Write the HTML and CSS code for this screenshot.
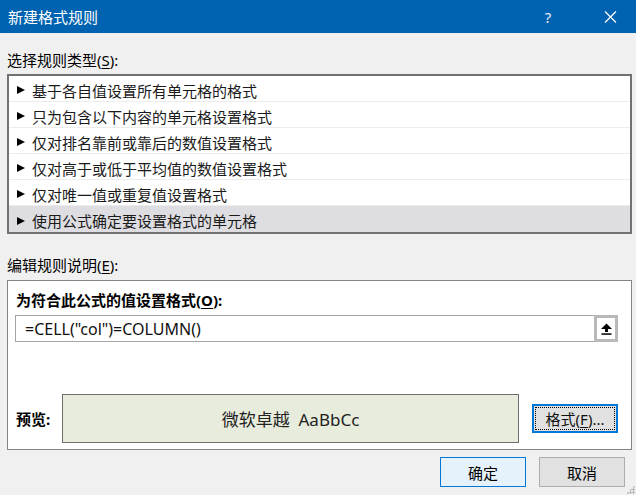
FILE: index.html
```html
<!DOCTYPE html>
<html lang="zh-CN">
<head>
    <meta charset="UTF-8">
    <title>新建格式规则</title>
    <link rel="stylesheet" href="styles.css">
</head>
<body>
    <div class="titlebar">
        <span class="title">新建格式规则</span>
        <span class="title-btn help">?</span>
        <span class="title-btn close">
            <svg width="13" height="12" viewBox="0 0 13 12"><path d="M1 0.5 L12 11.5 M12 0.5 L1 11.5" stroke="#fff" stroke-width="1.2" fill="none"/></svg>
        </span>
    </div>

    <div class="main">
        <div class="section-label first">选择规则类型(<u>S</u>):</div>
        <div class="rule-list">
            <div class="rule-item"><span class="arrow"></span>基于各自值设置所有单元格的格式</div>
            <div class="rule-item"><span class="arrow"></span>只为包含以下内容的单元格设置格式</div>
            <div class="rule-item"><span class="arrow"></span>仅对排名靠前或靠后的数值设置格式</div>
            <div class="rule-item"><span class="arrow"></span>仅对高于或低于平均值的数值设置格式</div>
            <div class="rule-item"><span class="arrow"></span>仅对唯一值或重复值设置格式</div>
            <div class="rule-item selected"><span class="arrow"></span>使用公式确定要设置格式的单元格</div>
        </div>

        <div class="section-label second">编辑规则说明(<u>E</u>):</div>
        <div class="edit-panel">
            <div class="panel-title">为符合此公式的值设置格式(<u>O</u>):</div>
            <div class="formula-row">
                <div class="formula-input">=CELL("col")=COLUMN()</div>
                <div class="ref-btn">
                    <svg width="11" height="12" viewBox="0 0 11 12">
                        <polygon points="0,6 5.5,0.5 11,6" fill="#000"/>
                        <rect x="4" y="5.5" width="3" height="3.5" fill="#000"/>
                        <rect x="0.5" y="10.3" width="10" height="1.5" fill="#000"/>
                    </svg>
                </div>
            </div>
            <div class="preview-row">
                <div class="preview-label">预览:</div>
                <div class="preview-box">微软卓越&nbsp; AaBbCc</div>
                <div class="format-btn"><span class="focus">格式(<u>F</u>)...</span></div>
            </div>
        </div>

        <div class="dialog-buttons">
            <div class="btn default">确定</div>
            <div class="btn">取消</div>
        </div>
    </div>

    <div class="grip"></div>
</body>
</html>
```

FILE: styles.css
```css
body {
    margin: 0;
    width: 636px;
    height: 495px;
    overflow: hidden;
    position: relative;
    background-color: #f0f0f0;
    font-family: "Noto Sans", "Noto Sans CJK SC", sans-serif;
    font-size: 15px;
    color: #000;
}

u {
    text-underline-offset: 2px;
}

.titlebar {
    height: 33px;
    display: flex;
    align-items: center;
    padding-left: 8px;
    background-color: #0063b1;
    color: #fff;
}

.title {
    flex: 1;
    line-height: 20px;
}

.title-btn {
    width: 46px;
    height: 33px;
    display: flex;
    align-items: center;
    justify-content: center;
}

.help {
    font-size: 15px;
    color: #e6eef8;
    margin-right: 16px;
}

.close {
    margin-right: 3px;
}

.main {
    padding: 0 4px 0 7px;
}

.section-label {
    line-height: 20px;
}

.section-label.first {
    margin-top: 17px;
}

.section-label.second {
    margin-top: 21px;
}

.rule-list {
    margin-top: 4px;
    border: 2px solid #727272;
    background-color: #fff;
}

.rule-item {
    height: 26px;
    box-sizing: border-box;
    display: flex;
    align-items: center;
    padding: 3px 0 0 8px;
    border-bottom: 1px solid #ececec;
    color: #1a1a1a;
}

.rule-item.selected {
    border-bottom: none;
    background-color: #dedee2;
}

.arrow {
    width: 0;
    height: 0;
    border-top: 4px solid transparent;
    border-bottom: 4px solid transparent;
    border-left: 8px solid #000;
    margin-right: 7px;
}

.edit-panel {
    margin-top: 5px;
    height: 170px;
    box-sizing: border-box;
    border: 1px solid #848484;
    background-color: #fff;
    padding: 9px 13px 0 8px;
}

.panel-title {
    font-weight: bold;
    line-height: 20px;
}

.formula-row {
    display: flex;
    margin: 5px 0 0 -1px;
    height: 27px;
}

.formula-input {
    flex: 1;
    border: 1px solid #a5a5a5;
    border-right: none;
    padding: 1px 0 0 9px;
    line-height: 24px;
    font-size: 16px;
    color: #111;
}

.ref-btn {
    width: 24px;
    box-sizing: border-box;
    border: 3px solid #b9b9b9;
    background-color: #fff;
    display: flex;
    align-items: center;
    justify-content: center;
}

.preview-row {
    display: flex;
    align-items: center;
    margin-top: 52px;
}

.preview-label {
    width: 46px;
    font-weight: bold;
}

.preview-box {
    width: 457px;
    height: 49px;
    box-sizing: border-box;
    border: 1px solid #6e6e6e;
    background-color: #e8ecdc;
    display: flex;
    align-items: center;
    justify-content: center;
    font-size: 17px;
    color: #222;
}

.format-btn {
    margin-left: 13px;
    width: 86px;
    height: 29px;
    box-sizing: border-box;
    border: 2px solid #0078d7;
    background-color: #e1e1e1;
    padding: 1px;
}

.format-btn .focus {
    display: flex;
    align-items: center;
    justify-content: center;
    height: 100%;
    box-sizing: border-box;
    border: 1px dotted #000;
    color: #111;
}

.dialog-buttons {
    display: flex;
    justify-content: flex-end;
    gap: 13px;
    margin-top: 7px;
    padding-right: 7px;
}

.btn {
    width: 86px;
    height: 30px;
    box-sizing: border-box;
    border: 1px solid #adadad;
    background-color: #e1e1e1;
    display: flex;
    align-items: center;
    justify-content: center;
}

.btn.default {
    border-color: #0078d7;
    background-color: #e5f1fb;
}

.grip {
    position: absolute;
    right: 1px;
    bottom: 1px;
    width: 9px;
    height: 9px;
    background-image: radial-gradient(circle, #b8b8b8 1px, transparent 1.2px);
    background-size: 3px 3px;
    clip-path: polygon(100% 0, 100% 100%, 0 100%);
}
```
